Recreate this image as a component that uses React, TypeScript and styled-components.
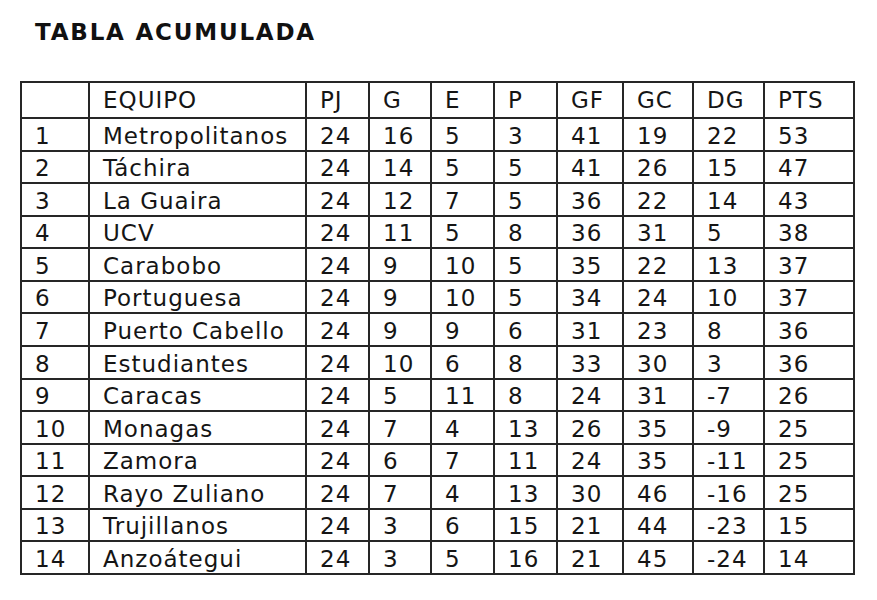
import React from "react";
import styled, { createGlobalStyle } from "styled-components";

const Global = createGlobalStyle`
  html, body { margin: 0; padding: 0; background: #ffffff; }
  body { font-family: "DejaVu Sans", Verdana, sans-serif; color: #141414; }
`;

const Page = styled.div`
  width: 877px;
  height: 600px;
  box-sizing: border-box;
  padding: 19px 0 0 20px;
  display: flex;
  flex-direction: column;
`;

const Title = styled.h1`
  margin: 0 0 0 15px;
  font-family: "DejaVu Sans", Verdana, sans-serif;
  font-weight: bold;
  font-size: 23px;
  line-height: 27px;
  letter-spacing: 1.8px;
  color: #111;
`;

const Table = styled.table`
  margin-top: 35px;
  width: 833px;
  table-layout: fixed;
  border-collapse: collapse;
  font-family: "DejaVu Sans", Verdana, sans-serif;
  font-size: 23px;
  letter-spacing: 1px;
  color: #151515;
`;

const Row = styled.tr<{ $head?: boolean }>`
  height: ${(p) => (p.$head ? "36px" : "32.57px")};
`;

const Cell = styled.td<{ $head?: boolean }>`
  border: 2px solid #262626;
  padding: 0 0 ${(p) => (p.$head ? "3px" : "0")} 13px;
  line-height: 27px;
  vertical-align: bottom;
  white-space: nowrap;
  overflow: hidden;
  font-weight: normal;
  text-align: left;
`;

const widths = [68, 217, 63, 62, 63, 63, 66, 70, 71, 90];
const header = ["", "EQUIPO", "PJ", "G", "E", "P", "GF", "GC", "DG", "PTS"];
const rows: (string | number)[][] = [
  [1, "Metropolitanos", 24, 16, 5, 3, 41, 19, 22, 53],
  [2, "Táchira", 24, 14, 5, 5, 41, 26, 15, 47],
  [3, "La Guaira", 24, 12, 7, 5, 36, 22, 14, 43],
  [4, "UCV", 24, 11, 5, 8, 36, 31, 5, 38],
  [5, "Carabobo", 24, 9, 10, 5, 35, 22, 13, 37],
  [6, "Portuguesa", 24, 9, 10, 5, 34, 24, 10, 37],
  [7, "Puerto Cabello", 24, 9, 9, 6, 31, 23, 8, 36],
  [8, "Estudiantes", 24, 10, 6, 8, 33, 30, 3, 36],
  [9, "Caracas", 24, 5, 11, 8, 24, 31, -7, 26],
  [10, "Monagas", 24, 7, 4, 13, 26, 35, -9, 25],
  [11, "Zamora", 24, 6, 7, 11, 24, 35, -11, 25],
  [12, "Rayo Zuliano", 24, 7, 4, 13, 30, 46, -16, 25],
  [13, "Trujillanos", 24, 3, 6, 15, 21, 44, -23, 15],
  [14, "Anzoátegui", 24, 3, 5, 16, 21, 45, -24, 14],
];

export default function App() {
  return (
    <>
      <Global />
      <Page>
        <Title>TABLA ACUMULADA</Title>
        <Table>
          <colgroup>
            {widths.map((w, i) => (
              <col key={i} style={{ width: w }} />
            ))}
          </colgroup>
          <thead>
            <Row $head>
              {header.map((h, i) => (
                <Cell as="th" $head key={i}>
                  {h}
                </Cell>
              ))}
            </Row>
          </thead>
          <tbody>
            {rows.map((r, ri) => (
              <Row key={ri}>
                {r.map((c, ci) => (
                  <Cell key={ci}>{c}</Cell>
                ))}
              </Row>
            ))}
          </tbody>
        </Table>
      </Page>
    </>
  );
}
